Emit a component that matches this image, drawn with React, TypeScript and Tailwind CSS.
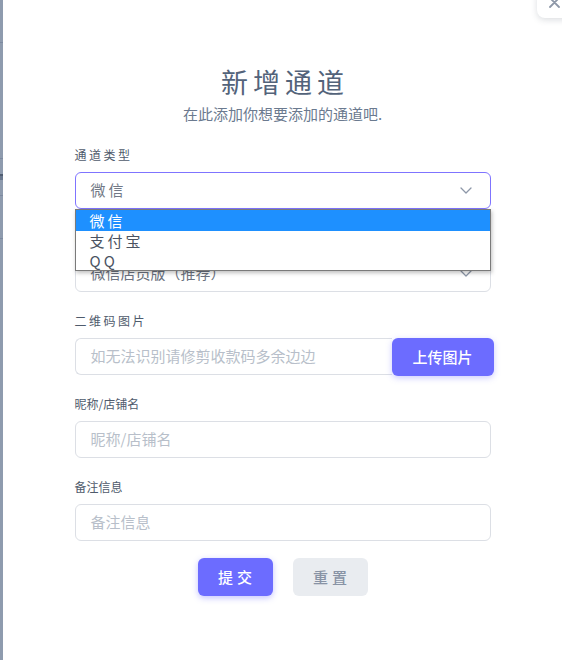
import React from "react";

const font = { fontFamily: '"Noto Sans CJK SC", "Noto Sans", sans-serif' };

function Chevron() {
  return (
    <svg width="12" height="7" viewBox="0 0 12 7" fill="none" className="text-[#8d97a8]">
      <path d="M1 1l5 5 5-5" stroke="currentColor" strokeWidth="1.3" strokeLinecap="round" strokeLinejoin="round" />
    </svg>
  );
}

function Label({ children, spaced }: { children: React.ReactNode; spaced?: boolean }) {
  return (
    <div className={`text-[12px] leading-[18px] text-[#4f5b6c] mb-[8px] ${spaced ? "tracking-[2.5px]" : ""}`}>
      {children}
    </div>
  );
}

export default function App() {
  return (
    <div className="w-[562px] h-[660px] flex bg-white overflow-hidden" style={font}>
      <div className="w-[3px] h-full bg-[#8e9bae] flex flex-col">
        <div className="h-[42px]" />
        <div className="h-px bg-[#7d8aa0]" />
        <div className="h-[115px]" />
        <div className="h-px bg-[#7d8aa0]" />
        <div className="h-[15px]" />
        <div className="h-[2px] bg-[#4f5d72]" />
        <div className="h-[4px] bg-[#6a788e]" />
        <div className="h-[15px]" />
        <div className="h-px bg-[#7d8aa0]" />
        <div className="h-[42px]" />
        <div className="h-px bg-[#7d8aa0]" />
      </div>
      <div className="relative flex-1 h-full bg-white">
        <div className="absolute left-[534px] top-[-12px] w-[40px] h-[30px] rounded-[8px] bg-white shadow-[0_2px_6px_rgba(60,70,90,0.18)] flex items-start justify-start pl-[12px] pt-[9px]">
          <svg width="11" height="11" viewBox="0 0 11 11">
            <path d="M1 1l9 9M10 1l-9 9" stroke="#8e98a8" strokeWidth="1.8" strokeLinecap="round" />
          </svg>
        </div>

        <div className="w-[416px] mx-auto pt-[65px] flex flex-col">
          <div className="text-[27px] leading-[34px] text-center text-[#53637a] tracking-[5px] pl-[5px]">新增通道</div>
          <div className="mt-[5px] text-[15px] leading-[20px] text-center text-[#6b7a8f]">在此添加你想要添加的通道吧.</div>

          <div className="mt-[22px]">
            <Label spaced>通道类型</Label>
            <div className="relative">
              <div className="h-[37px] rounded-[6px] border border-[#7f74ff] flex items-center justify-between pl-[15px] pr-[18px]">
                <span className="text-[15px] text-[#727986] tracking-[3px]">微信</span>
                <Chevron />
              </div>
              <div className="absolute z-10 left-0 right-0 top-[37px] bg-white border border-[#7a7a7a] shadow-[1px_2px_4px_rgba(0,0,0,0.25)] text-[15px] leading-[20px] tracking-[3px]">
                <div className="h-[21px] bg-[#1e90ff] text-white pl-[14px] flex items-center">微信</div>
                <div className="h-[20px] text-[#4b5362] pl-[14px] flex items-center">支付宝</div>
                <div className="h-[19px] text-[#4b5362] pl-[14px] flex items-center">QQ</div>
              </div>
            </div>
          </div>

          <div className="mt-[20px]">
            <Label spaced>收款方式</Label>
            <div className="h-[37px] rounded-[6px] border border-[#dcdfe5] flex items-center justify-between pl-[15px] pr-[18px]">
              <span className="text-[15px] text-[#6b7280]">微信店员版（推荐）</span>
              <Chevron />
            </div>
          </div>

          <div className="mt-[20px]">
            <Label spaced>二维码图片</Label>
            <div className="flex h-[37px]">
              <div className="flex-1 rounded-l-[6px] border border-r-0 border-[#dcdfe5] flex items-center pl-[15px] text-[15px] text-[#b8bfca]">
                如无法识别请修剪收款码多余边边
              </div>
              <div className="w-[102px] h-[38px] mr-[-3px] rounded-[6px] bg-[#6c6cff] text-white text-[15px] font-medium flex items-center justify-center shadow-[0_2px_6px_rgba(108,108,255,0.35)]">
                上传图片
              </div>
            </div>
          </div>

          <div className="mt-[20px]">
            <Label>昵称/店铺名</Label>
            <div className="h-[37px] rounded-[6px] border border-[#dcdfe5] flex items-center pl-[15px] text-[15px] text-[#b8bfca]">
              昵称/店铺名
            </div>
          </div>

          <div className="mt-[20px]">
            <Label>备注信息</Label>
            <div className="h-[37px] rounded-[6px] border border-[#dcdfe5] flex items-center pl-[15px] text-[15px] text-[#b8bfca]">
              备注信息
            </div>
          </div>

          <div className="mt-[17px] flex justify-center gap-[20px]">
            <div className="w-[75px] h-[38px] rounded-[6px] bg-[#6c6cff] text-white text-[15px] font-medium tracking-[4px] pl-[4px] flex items-center justify-center shadow-[0_2px_6px_rgba(108,108,255,0.4)]">
              提交
            </div>
            <div className="w-[75px] h-[38px] rounded-[6px] bg-[#e9ecf0] text-[#8893a5] text-[15px] font-medium tracking-[4px] pl-[4px] flex items-center justify-center">
              重置
            </div>
          </div>
        </div>
      </div>
    </div>
  );
}
